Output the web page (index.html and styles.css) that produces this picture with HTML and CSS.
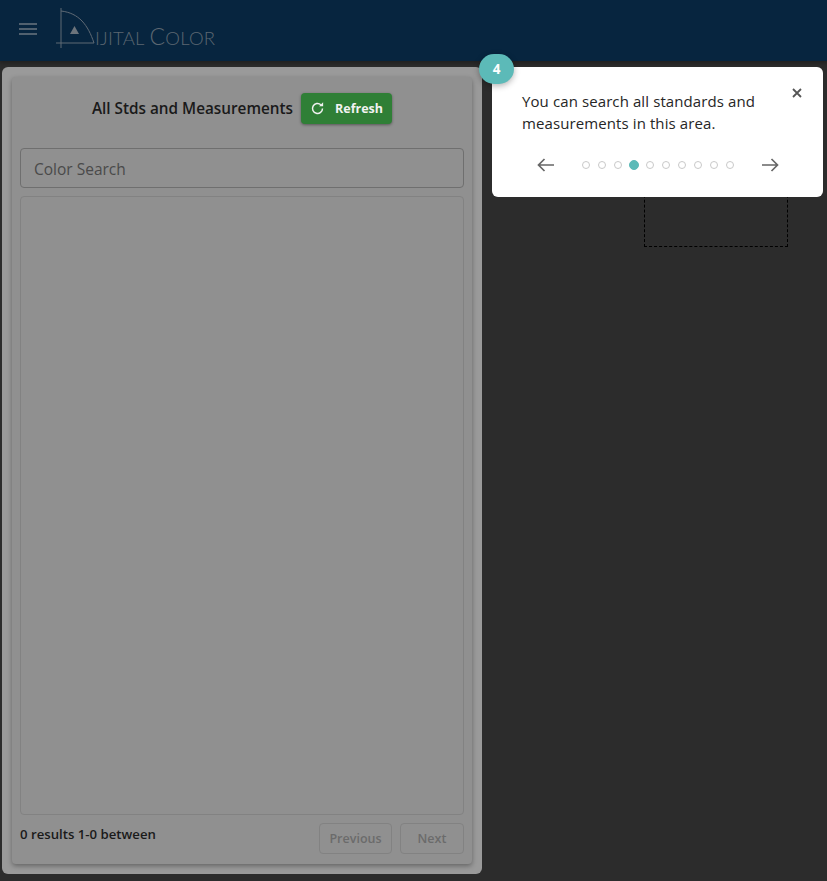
FILE: index.html
```html
<!DOCTYPE html>
<html lang="en">

<head>
  <meta charset="UTF-8">
  <meta name="viewport" content="width=device-width, initial-scale=1.0">
  <title>Dijital Color</title>
  <link rel="stylesheet" href="styles.css">
</head>

<body>
  <header class="topbar">
    <button class="menu-btn" aria-label="Menu">
      <svg width="18" height="12" viewBox="0 0 18 12"><path d="M0 1h18M0 6h18M0 11h18" stroke="#6b7580" stroke-width="1.6" fill="none"/></svg>
    </button>
    <div class="logo">
      <svg class="logo-mark" width="42" height="42" viewBox="0 0 42 42">
        <path d="M5 0v40M0 35h38" stroke="#5f6a75" stroke-width="1" fill="none"/>
        <path d="M5 3c18 2 27 14 33 32" stroke="#5f6a75" stroke-width="1" fill="none"/>
        <path d="M14 26l4.500-8 4.500 8z" fill="#6c747c"/>
      </svg>
      <span class="logo-text">IJITAL <span class="logo-cap">C</span>OLOR</span>
    </div>
  </header>

  <main class="content">
    <section class="panel">
      <div class="card">
        <div class="card-head">
          <h2>All Stds and Measurements</h2>
          <button class="refresh">
            <svg width="15" height="15" viewBox="0 0 24 24"><path d="M20 12a8 8 0 1 1-2.600-5.900" stroke="#f2f2f2" stroke-width="2.400" fill="none"/><path d="M21 2v6.500h-6.500z" fill="#f2f2f2"/></svg>
            Refresh
          </button>
        </div>
        <div class="search">Color Search</div>
        <div class="results"></div>
        <div class="card-foot">
          <span class="count">0 results 1-0 between</span>
          <div class="pager">
            <button class="page-btn">Previous</button>
            <button class="page-btn">Next</button>
          </div>
        </div>
      </div>
    </section>
  </main>

  <!-- tour spotlight + step popup -->
  <div class="spot"></div>
  <div class="tour">
    <span class="step">4</span>
    <button class="tour-close" aria-label="Close">
      <svg width="10" height="10" viewBox="0 0 10 10"><path d="M1 1l8 8M9 1l-8 8" stroke="#555" stroke-width="1.800" fill="none"/></svg>
    </button>
    <p>You can search all standards and measurements in this area.</p>
    <div class="tour-nav">
      <svg width="18" height="14" viewBox="0 0 18 14"><path d="M17 7H1.500M7.500 1L1.500 7l6 6" stroke="#666" stroke-width="1.700" fill="none"/></svg>
      <div class="dots">
        <i></i><i></i><i></i><i class="on"></i><i></i><i></i><i></i><i></i><i></i><i></i>
      </div>
      <svg width="18" height="14" viewBox="0 0 18 14"><path d="M1 7h15.500M10.500 1l6 6-6 6" stroke="#666" stroke-width="1.700" fill="none"/></svg>
    </div>
  </div>
</body>

</html>
```

FILE: styles.css
```css
* {
  margin: 0;
  padding: 0;
  box-sizing: border-box;
}

html,
body {
  height: 100%;
}

body {
  background: #2c2c2c;
  font-family: "Open Sans", "Noto Sans", sans-serif;
  overflow: hidden;
}

button {
  font-family: inherit;
  background: none;
  border: 0;
}

.topbar {
  height: 61px;
  background: #07253f;
  display: flex;
  align-items: center;
  padding-left: 19px;
  box-shadow: 0 2px 4px rgba(0, 0, 0, 0.3);
}

.menu-btn {
  display: flex;
  margin-top: -3px;
}

.logo {
  display: flex;
  align-items: flex-end;
  margin-left: 19px;
  margin-top: -4px;
}

.logo-mark {
  display: block;
}

.logo-text {
  font-family: "Lato", sans-serif;
  font-weight: 300;
  font-size: 18.500px;
  letter-spacing: 0.250px;
  color: #5c6771;
  margin-left: -3px;
  margin-bottom: 1px;
  line-height: 22px;
  white-space: nowrap;
}

.logo-cap {
  font-size: 23px;
}

.content {
  padding: 6px 0 0 2px;
}

.panel {
  width: 480px;
  height: 807px;
  background: #9a9a9a;
  border-radius: 6px;
  padding: 10px;
}

.card {
  height: 787px;
  background: #909090;
  border-radius: 4px;
  padding: 16px 8px 10px;
  display: flex;
  flex-direction: column;
  box-shadow: 0 2px 5px rgba(0, 0, 0, 0.35);
}

.card-head {
  display: flex;
  justify-content: center;
  align-items: center;
  gap: 8px;
  height: 31px;
  margin-bottom: 24px;
}

.card-head h2 {
  font-size: 15.300px;
  font-weight: 600;
  color: #1a1a1a;
  margin-top: -2px;
}

.refresh {
  width: 91px;
  height: 31px;
  background: #2f7f36;
  color: #f2f2f2;
  border-radius: 4px;
  font-size: 12.500px;
  font-weight: 700;
  display: flex;
  align-items: center;
  justify-content: center;
  gap: 10px;
  box-shadow: 0 1px 3px rgba(0, 0, 0, 0.4);
}

.search {
  height: 40px;
  border: 1px solid #6f6f6f;
  border-radius: 4px;
  padding-left: 13px;
  font-size: 15.500px;
  line-height: 40px;
  color: #4a4a4a;
  margin-bottom: 8px;
}

.results {
  flex: 1;
  border: 1px solid #828282;
  border-radius: 4px;
}

.card-foot {
  display: flex;
  justify-content: space-between;
  margin-top: 8px;
}

.count {
  font-size: 13.200px;
  font-weight: 600;
  color: #1a1a1a;
  line-height: 22px;
}

.pager {
  display: flex;
  gap: 8px;
}

.page-btn {
  height: 31px;
  padding: 0 9px;
  border: 1px solid #828282;
  border-radius: 4px;
  font-size: 12.500px;
  font-weight: 600;
  color: #6b6b6b;
  min-width: 64px;
}

.page-btn:first-child {
  width: 73px;
}

.spot {
  position: absolute;
  left: 644px;
  top: 180px;
  width: 144px;
  height: 67px;
  border: 1px dashed #000;
}

.tour {
  position: absolute;
  left: 492px;
  top: 67px;
  width: 331px;
  height: 130px;
  background: #fff;
  border-radius: 6px;
  padding: 23px 30px 0;
  color: #262626;
}

.tour p {
  font-size: 15px;
  line-height: 22px;
  letter-spacing: 0.100px;
}

.step {
  position: absolute;
  left: -13px;
  top: -13px;
  width: 35px;
  height: 30px;
  border-radius: 15px;
  background: #5cbab8;
  color: #fff;
  font-size: 13.500px;
  font-weight: 700;
  line-height: 30px;
  text-align: center;
  box-shadow: 0 2px 6px rgba(0, 0, 0, 0.3);
}

.tour-close {
  position: absolute;
  right: 21px;
  top: 21px;
  display: flex;
}

.tour-nav {
  display: flex;
  align-items: center;
  justify-content: space-between;
  margin: 24px 0 0 15px;
  width: 242px;
}

.dots {
  display: flex;
  align-items: center;
  gap: 8px;
}

.dots i {
  width: 8px;
  height: 8px;
  border: 1px solid #c9c9c9;
  border-radius: 50%;
}

.dots i.on {
  width: 10px;
  height: 10px;
  margin: 0 -1px;
  background: #5cbab8;
  border-color: #5cbab8;
}
```
